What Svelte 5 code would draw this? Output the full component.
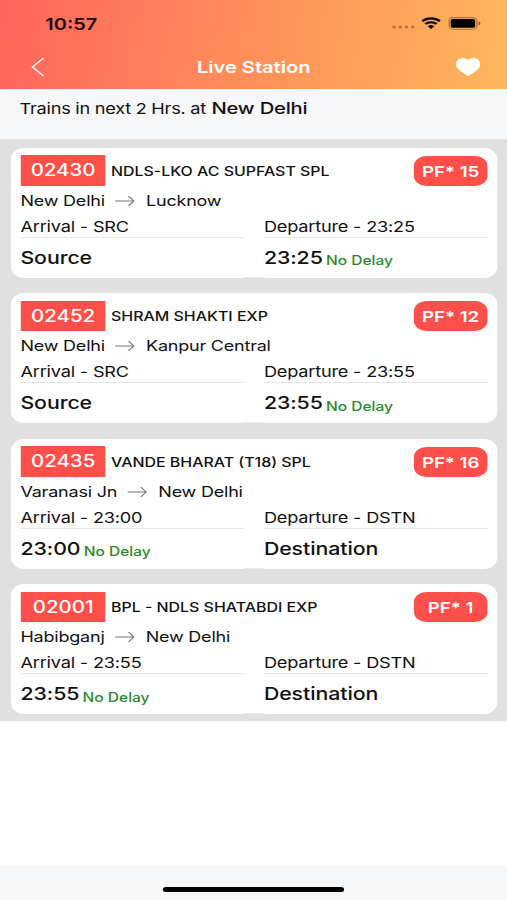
<script>
  const trains = [
    { no: '02430', name: 'NDLS-LKO AC SUPFAST SPL', pf: '15', from: 'New Delhi', to: 'Lucknow', arr: 'SRC', dep: '23:25' },
    { no: '02452', name: 'SHRAM SHAKTI EXP', pf: '12', from: 'New Delhi', to: 'Kanpur Central', arr: 'SRC', dep: '23:55' },
    { no: '02435', name: 'VANDE BHARAT (T18) SPL', pf: '16', from: 'Varanasi Jn', to: 'New Delhi', arr: '23:00', dep: 'DSTN' },
    { no: '02001', name: 'BPL - NDLS SHATABDI EXP', pf: '1', from: 'Habibganj', to: 'New Delhi', arr: '23:55', dep: 'DSTN' }
  ];
  const terminal = { SRC: 'Source', DSTN: 'Destination' };
</script>

{#snippet stop(label, value)}
  <div class="stop">
    <div class="label">{label} - {value}</div>
    <div class="value">
      {#if terminal[value]}
        <strong>{terminal[value]}</strong>
      {:else}
        <strong>{value}</strong><span class="delay">No Delay</span>
      {/if}
    </div>
  </div>
{/snippet}

<div class="phone">
  <header>
    <div class="status">
      <span class="time">10:57</span>
      <div class="indicators">
        <svg class="dots" width="19" height="4" viewBox="0 0 19 4" fill="#65451f" fill-opacity=".45">
          <circle cx="1.9" cy="2" r="1.5" /><circle cx="6.9" cy="2" r="1.5" /><circle cx="11.9" cy="2" r="1.5" /><circle cx="16.9" cy="2" r="1.5" />
        </svg>
        <svg class="wifi" width="16" height="12" viewBox="0 0 16 12" fill="none" stroke="#000" stroke-width="2.1">
          <path d="M.8 4.3a10.4 10.4 0 0 1 14.4 0" />
          <path d="M3.4 7.1a6.7 6.7 0 0 1 9.2 0" />
          <path d="M8 12 5.3 9.3a3.9 3.9 0 0 1 5.4 0z" fill="#000" stroke="none" />
        </svg>
        <svg class="battery" width="27" height="13" viewBox="0 0 27 13">
          <rect x=".6" y=".6" width="22.8" height="11.6" rx="3.4" fill="none" stroke="#5d3b18" stroke-opacity=".5" stroke-width="1.1" />
          <rect x="2" y="2" width="20" height="8.8" rx="1.9" fill="#000" />
          <path d="M24.8 4.4c2 .7 2 3.4 0 4.1z" fill="#5d3b18" fill-opacity=".7" />
        </svg>
      </div>
    </div>
    <nav>
      <svg class="back" width="12" height="20" viewBox="0 0 12 20" fill="none" stroke="#fff" stroke-width="1.2">
        <path d="M10.6 1 1.400 10l9.200 9" />
      </svg>
      <h1>Live Station</h1>
      <svg class="heart" width="20.5" height="20" viewBox="0 0 21 20" fill="#fff">
        <path d="M10.5 19.600C7.800 17.300 4.300 14.800 2.100 12.100.8 10.300.2 8.500.4 6.400.7 3.200 3.100.7 6 .7c1.900 0 3.500.9 4.500 2.400C11.500 1.600 13.100.7 15 .7c2.900 0 5.300 2.500 5.600 5.700.2 2.100-.4 3.900-1.700 5.700-2.200 2.700-5.700 5.200-8.400 7.500z" />
      </svg>
    </nav>
  </header>

  <div class="summary"><span>Trains in next 2 Hrs. at</span><b>New Delhi</b></div>

  <main>
    {#each trains as t}
      <article>
        <div class="head">
          <span class="number">{t.no}</span>
          <span class="name">{t.name}</span>
          <span class="platform">PF* {t.pf}</span>
        </div>
        <div class="route">
          <span>{t.from}</span>
          <svg width="16" height="12" viewBox="0 0 16 12" fill="none" stroke="#777" stroke-width="1"><path d="M0 6h15.300M11 1.200 15.300 6 11 10.800" /></svg>
          <span>{t.to}</span>
        </div>
        <div class="stops">
          {@render stop('Arrival', t.arr)}
          {@render stop('Departure', t.dep)}
        </div>
      </article>
    {/each}
  </main>

  <footer><div class="home"></div></footer>
</div>

<style>
  :global(body) { margin: 0; overflow: hidden; background: #fff; }
  /* 414pt canvas stretched across the full viewport width */
  .phone {
    width: 414px; height: 900px; display: flex; flex-direction: column;
    transform: scaleX(1.22464); transform-origin: 0 0;
    font-family: Inter, "Liberation Sans", sans-serif; color: #111; background: #fff;
    white-space: nowrap;
  }
  header {
    height: 89.400px; flex: none; box-sizing: border-box;
    background: linear-gradient(97deg, #ff645c 0%, #ff8b5a 45%, #ffb65b 100%);
  }
  .status { height: 45.500px; display: flex; justify-content: space-between; padding: 0 21px 0 37px; }
  .time { font-size: 16.300px; font-weight: 600; line-height: 20px; margin-top: 14px; color: #1a0704; }
  .indicators { display: flex; align-items: flex-start; }
  .dots { margin: 25.400px 5.500px 0 0; }
  .wifi { margin: 17px 6px 0 0; }
  .battery { margin-top: 17px; }
  nav { display: flex; align-items: center; height: 43px; padding: 0 22px 0 25px; }
  nav svg { flex: none; }
  .heart { margin-top: -.5px; }
  h1 { flex: 1; margin: -1px 0 0 5.800px; text-align: center; color: #fff; font-size: 16.400px; line-height: 20px; font-weight: 600; }
  .summary {
    height: 49.600px; flex: none; box-sizing: border-box; padding: 7.600px 0 0 16px;
    background: #f5f7f9; display: flex; align-items: baseline; gap: 4.500px; line-height: 22px;
    font-size: 14.800px; letter-spacing: -.2px;
  }
  .summary b { font-size: 16.500px; font-weight: 500; letter-spacing: -.15px; }
  main {
    height: 582px; flex: none; box-sizing: border-box; background: #e0e0e0;
    padding: 8.600px 8px 0 8.800px; display: flex; flex-direction: column; gap: 15.500px;
  }
  article { position: relative; height: 130px; box-sizing: border-box; border-radius: 11px; background: #fff; padding: 7.900px 7.900px 0 7.900px; }
  article::after { content: ""; position: absolute; left: 190px; bottom: 0; width: 17px; height: .8px; background: #e8e8e8; }
  .head { display: flex; height: 30.400px; align-items: center; }
  .number {
    width: 69.700px; height: 30.400px; line-height: 31px; text-align: center; background: #ff4f4a;
    color: #fff; font-size: 16.700px; font-weight: 500;
  }
  .name { flex: 1; margin-left: 4.300px; font-size: 13px; font-weight: 500; }
  .platform {
    width: 60.300px; height: 30.200px; line-height: 31px; border-radius: 10px; text-align: center;
    background: #ff4f4a; color: #fff; font-size: 15.200px; font-weight: 600;
  }
  .route { display: flex; align-items: center; height: 20px; margin-top: 5px; gap: 8.800px; font-size: 14.700px; letter-spacing: -.17px; }
  .stops { display: grid; grid-template-columns: 182px 182.500px; column-gap: 16.800px; margin-top: 5px; }
  .label { height: 20.800px; line-height: 22px; font-size: 14.800px; letter-spacing: -.15px; border-bottom: 1px solid #e4e4e4; }
  .value { display: flex; align-items: baseline; gap: 2.600px; height: 38px; line-height: 40.600px; }
  strong { font-size: 17.400px; font-weight: 500; letter-spacing: -.06px; }
  .delay { position: relative; top: 1.500px; font-size: 12.700px; font-weight: 500; color: #2a8a2a; }
  footer { height: 34px; margin-top: auto; background: #f5f7f9; display: flex; justify-content: center; }
  .home { width: 148px; height: 5px; border-radius: 3px; background: #000; margin-top: 21px; }
</style>
